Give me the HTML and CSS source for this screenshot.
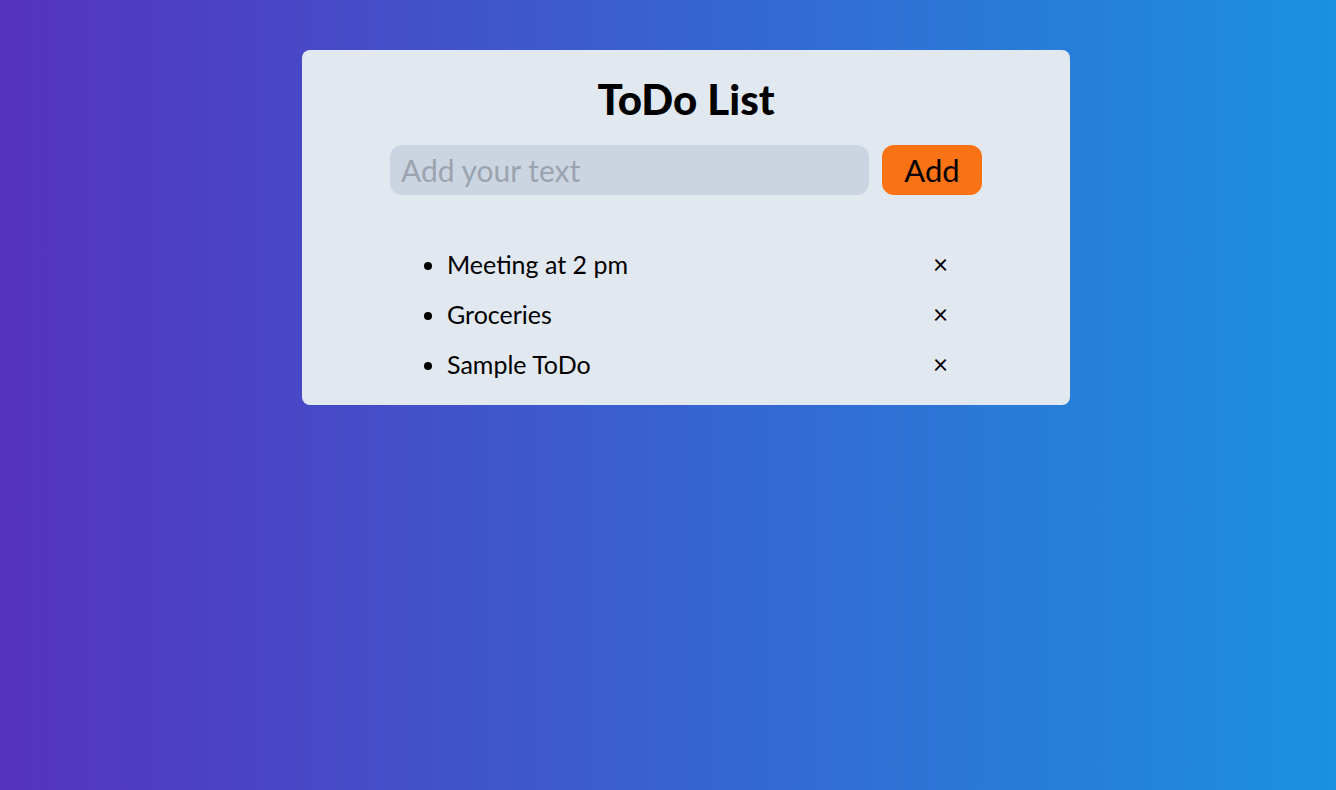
FILE: index.html
```html
<!DOCTYPE html>
<html lang="en">
<head>
<meta charset="utf-8">
<title>ToDo List</title>
<link rel="stylesheet" href="styles.css">
</head>
<body>
<main class="page">
  <section class="card">
    <h1 class="title">ToDo List</h1>
    <form class="add-form">
      <input class="add-input" type="text" placeholder="Add your text">
      <button class="add-btn" type="button">Add</button>
    </form>
    <ul class="todo-list">
      <li class="todo-item"><span class="todo-text">Meeting at 2 pm</span><span class="todo-del">×</span></li>
      <li class="todo-item"><span class="todo-text">Groceries</span><span class="todo-del">×</span></li>
      <li class="todo-item"><span class="todo-text">Sample ToDo</span><span class="todo-del">×</span></li>
    </ul>
  </section>
</main>
</body>
</html>
```

FILE: styles.css
```css
* { box-sizing: border-box; }
html, body { margin: 0; padding: 0; }
body {
  font-family: "Lato", "Noto Sans", sans-serif;
  min-height: 790px;
  background: linear-gradient(to right, #5533be, #1b91e0);
}
.page {
  display: flex;
  justify-content: center;
  padding: 50px 0 0 36px;
}
.card {
  width: 768px;
  background: #e2e8f0;
  border-radius: 8px;
  padding: 20px 0 16px;
  display: flex;
  flex-direction: column;
  align-items: center;
}
.title {
  margin: 0;
  font-size: 42px;
  font-weight: 900;
  line-height: 58px;
  color: #000;
}
.add-form {
  margin-top: 17px;
  display: flex;
  gap: 13px;
}
.add-input {
  width: 479px;
  height: 50px;
  border: none;
  outline: none;
  border-radius: 12px;
  background: #cbd5e1;
  padding: 0 11px;
  font-family: inherit;
  font-size: 30px;
  color: #000;
}
.add-input::placeholder { color: #9ca3af; }
.add-btn {
  width: 100px;
  height: 50px;
  border: none;
  border-radius: 12px;
  background: #f97316;
  font-family: inherit;
  font-size: 31px;
  color: #000;
  padding: 0;
}
.todo-list {
  margin: 44px 0 0;
  width: 592px;
  padding: 0 34px 0 57px;
  list-style: disc;
}
.todo-item {
  height: 50px;
  font-size: 25px;
  color: #000;
}
.todo-item::marker { font-size: 24px; }
.todo-text { display: inline-block; line-height: 50px; }
.todo-del { float: right; line-height: 50px; font-size: 26px; }
```
